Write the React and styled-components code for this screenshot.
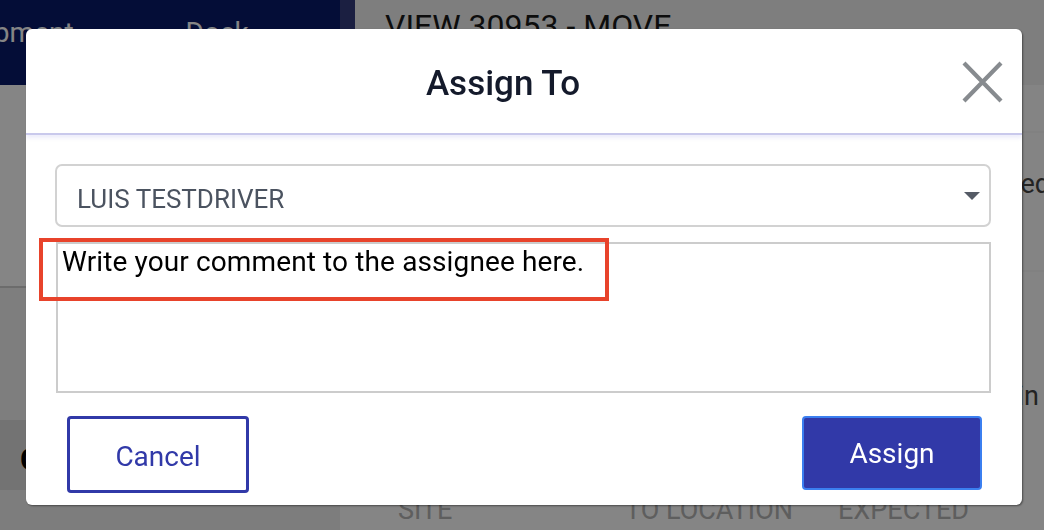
import React from "react";
import styled, { createGlobalStyle } from "styled-components";

const Global = createGlobalStyle`
  html, body { margin: 0; padding: 0; }
  body { font-family: Roboto, "Liberation Sans", sans-serif; background: #f2f2f2; overflow: hidden; }
  * { box-sizing: border-box; }
`;

/* ---------- background page ---------- */
const Page = styled.div`
  width: 1044px;
  height: 530px;
  display: flex;
  flex-direction: column;
  overflow: hidden;
`;

const TopBar = styled.div`
  display: flex;
  height: 85px;
  flex-shrink: 0;
`;

const Nav = styled.nav`
  width: 355px;
  background: #08196a;
  display: flex;
  align-items: flex-start;
  gap: 112px;
  padding: 16px 0 0;
  border-right: 15px solid #343c7e;
  overflow: hidden;
`;

const NavTab = styled.span`
  color: #ffffff;
  font-size: 28px;
  white-space: nowrap;
  margin-left: ${(p) => p.$offset || 0}px;
`;

const PageTitle = styled.h1`
  flex: 1;
  margin: 0;
  padding: 7px 0 0 30px;
  font-size: 32px;
  font-weight: 400;
  color: #1a1a1a;
  background: #f2f2f2;
`;

const Body = styled.div`
  flex: 1;
  display: flex;
`;

const Sidebar = styled.aside`
  width: 340px;
  display: flex;
  flex-direction: column;
  background: #f2f2f2;
`;

const SideBlock = styled.div`
  height: ${(p) => p.$h}px;
  background: ${(p) => p.$bg || "#ffffff"};
  border-bottom: ${(p) => (p.$line ? "2px solid #d0d0d0" : "none")};
  padding: 20px 0 0 20px;
  font-size: 32px;
  font-weight: 700;
  color: #000;
`;

const Main = styled.main`
  flex: 1;
  display: flex;
  flex-direction: column;
  background: #fefefe;
`;

const MainRow = styled.div`
  height: ${(p) => p.$h}px;
  border-bottom: ${(p) => (p.$line ? "2px solid #f8f8f8" : "none")};
  display: flex;
  align-items: ${(p) => p.$align || "center"};
  justify-content: flex-end;
  padding-bottom: ${(p) => p.$pb || 0}px;
  color: #444;
  font-size: 27px;
  white-space: nowrap;
`;

const EdgeText = styled.span`
  margin-right: ${(p) => p.$mr}px;
`;

const TableHead = styled.div`
  display: flex;
  padding: 4px 0 0 58px;
  color: #b4b4b4;
  font-size: 27px;
  text-transform: uppercase;
  background: #ffffff;
  flex: 1;
`;

const HeadCell = styled.span`
  width: ${(p) => p.$w}px;
  white-space: nowrap;
`;

/* ---------- modal ---------- */
const Overlay = styled.div`
  position: fixed;
  inset: 0;
  background: rgba(0, 0, 0, 0.48);
  padding: 29px 0 0 26px;
`;

const Modal = styled.div`
  width: 996px;
  height: 476px;
  background: #ffffff;
  border-radius: 6px;
  box-shadow: 1px 1px 2px rgba(0, 0, 0, 0.45);
  display: flex;
  flex-direction: column;
  overflow: hidden;
`;

const Header = styled.header`
  height: 106px;
  flex-shrink: 0;
  display: flex;
  align-items: center;
  border-bottom: 2px solid #c9c9ec;
  box-shadow: 0 3px 4px rgba(150, 150, 230, 0.18);
`;

const Title = styled.h2`
  flex: 1;
  margin: 0;
  padding: 4px 0 0 18px;
  text-align: center;
  font-size: 35px;
  font-weight: 500;
  color: #141a2b;
`;

const CloseButton = styled.button`
  width: 41px;
  height: 42px;
  padding: 0;
  margin: 2px 19px 0 0;
  border: none;
  background: transparent;
  display: flex;
  cursor: pointer;
`;

const Content = styled.div`
  position: relative;
  padding: 29px 31px 0 29px;
  display: flex;
  flex-direction: column;
`;

const Select = styled.div`
  height: 63px;
  border: 2px solid #d2d2d2;
  border-radius: 7px;
  display: flex;
  align-items: center;
  justify-content: space-between;
  padding: 7px 9px 0 20px;
  font-size: 26px;
  color: #4b5360;
`;

const Caret = styled.span`
  width: 0;
  height: 0;
  border-left: 8px solid transparent;
  border-right: 8px solid transparent;
  border-top: 8px solid #555b66;
  margin-top: -6px;
`;

const Comment = styled.textarea`
  margin: 15px 0 0 1px;
  height: 151px;
  border: 2px solid #cccccc;
  border-radius: 0;
  padding: 1px 4px;
  resize: none;
  font-family: Roboto, "Liberation Sans", sans-serif;
  font-size: 28px;
  letter-spacing: 0.12px;
  color: #000;
  outline: none;
  &::placeholder { color: #000; opacity: 1; }
`;

const Highlight = styled.div`
  position: absolute;
  left: 13px;
  top: 103px;
  width: 570px;
  height: 63px;
  border: 4px solid #e8432b;
  pointer-events: none;
`;

const Footer = styled.footer`
  display: flex;
  justify-content: space-between;
  align-items: flex-start;
  padding: 23px 40px 0 41px;
`;

const Button = styled.button`
  width: ${(p) => (p.$primary ? 180 : 182)}px;
  height: ${(p) => (p.$primary ? 74 : 77)}px;
  border-radius: 4px;
  font-family: Roboto, "Liberation Sans", sans-serif;
  font-size: 28px;
  cursor: pointer;
  background: ${(p) => (p.$primary ? "#3139a8" : "#ffffff")};
  color: ${(p) => (p.$primary ? "#ffffff" : "#3139a8")};
  border: ${(p) => (p.$primary ? "2px solid #3b7ff0" : "3px solid #3139a8")};
  padding: ${(p) => (p.$primary ? "0" : "3px 0 0")};
`;

export default function App() {
  return (
    <>
      <Global />
      <Page>
        <TopBar>
          <Nav>
            <NavTab $offset={-45}>Shipment</NavTab>
            <NavTab>Dock</NavTab>
          </Nav>
          <PageTitle>VIEW 30953 - MOVE</PageTitle>
        </TopBar>
        <Body>
          <Sidebar>
            <SideBlock $h={203} $line />
            <SideBlock $h={132} $bg="#f2f2f2" />
            <SideBlock $h={70} $bg="#dcdcdc">Ch</SideBlock>
            <SideBlock $h={40} $bg="#f0f0f0" />
          </Sidebar>
          <Main>
            <MainRow $h={48} $line />
            <MainRow $h={139} $line $pb={36}>
              <EdgeText $mr={-6}>Reassigned</EdgeText>
            </MainRow>
            <MainRow $h={140} $align="flex-end" $pb={0}>
              <EdgeText $mr={5}>Driver Assign in</EdgeText>
            </MainRow>
            <MainRow $h={78} />
            <TableHead>
              <HeadCell $w={227}>Site</HeadCell>
              <HeadCell $w={213}>To Location</HeadCell>
              <HeadCell $w={150}>Expected</HeadCell>
            </TableHead>
          </Main>
        </Body>
      </Page>

      <Overlay>
        <Modal role="dialog" aria-label="Assign To">
          <Header>
            <Title>Assign To</Title>
            <CloseButton aria-label="Close">
              <svg width="41" height="42" viewBox="0 0 41 42">
                <path d="M2 2 L39 40 M39 2 L2 40" stroke="#878b8f" strokeWidth="4.2" fill="none" />
              </svg>
            </CloseButton>
          </Header>
          <Content>
            <Select>
              <span>LUIS TESTDRIVER</span>
              <Caret />
            </Select>
            <Comment placeholder="Write your comment to the assignee here." />
            <Highlight />
          </Content>
          <Footer>
            <Button>Cancel</Button>
            <Button $primary>Assign</Button>
          </Footer>
        </Modal>
      </Overlay>
    </>
  );
}
